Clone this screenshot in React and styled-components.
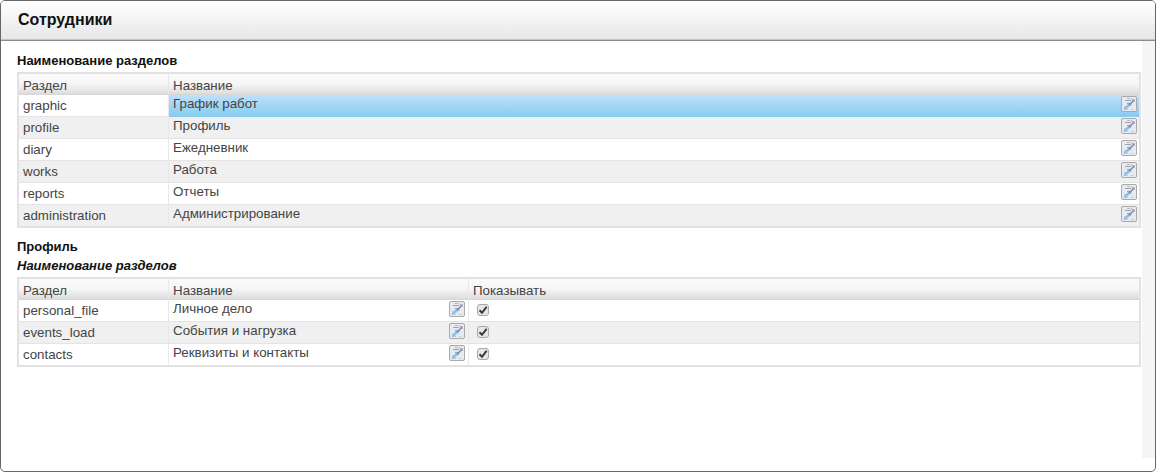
import styled, { createGlobalStyle } from 'styled-components';

const sections = [
  ['graphic', 'График работ'],
  ['profile', 'Профиль'],
  ['diary', 'Ежедневник'],
  ['works', 'Работа'],
  ['reports', 'Отчеты'],
  ['administration', 'Администрирование'],
];

const profile = [
  ['personal_file', 'Личное дело'],
  ['events_load', 'События и нагрузка'],
  ['contacts', 'Реквизиты и контакты'],
];

const EditIcon = () => (
  <EditButton>
    <svg width="14" height="14" viewBox="0 0 14 14">
      <path d="M2 13V9h2l4-4 2 3-4 3v2z" fill="#a9d3f0" />
      <path d="M2 12.5l5-5" stroke="#7fb8e4" strokeWidth="1.2" />
      <path d="M3 3.5h6M5 6.5h3" stroke="#99a1b4" strokeWidth="1" fill="none" />
      <path d="M5 1.5h3" stroke="#b0b6c4" strokeWidth="1" fill="none" />
      <path d="M7 8.5L12.5 2.5" stroke="#78829a" strokeWidth="1.2" />
      <path d="M9.5 1.5l3 3.5" stroke="#8b93a8" strokeWidth="1" />
      <path d="M9 12.5h2.5" stroke="#c2c8d4" strokeWidth="1" />
    </svg>
  </EditButton>
);

const CheckMark = () => (
  <CheckBox>
    <svg width="10" height="10" viewBox="0 0 10 10">
      <path d="M1.5 5.2L4 7.8 8.6 1.8" stroke="#3a3a3a" strokeWidth="2" fill="none" />
    </svg>
  </CheckBox>
);

const App = () => {
  return (
    <Window>
      <GlobalStyle />
      <Header>Сотрудники</Header>
      <Body>
        <Content>
          <SectionTitle>Наименование разделов</SectionTitle>
          <Table>
            <HeadRow $columns="149px 1fr">
              <HeadCell>Раздел</HeadCell>
              <HeadCell>Название</HeadCell>
            </HeadRow>
            {sections.map(([key, name], i) => (
              <Row key={key} $columns="149px 1fr" $odd={i % 2 === 1}>
                <KeyCell>{key}</KeyCell>
                <NameCell $selected={i === 0} $wide>
                  {name}
                  <EditIcon />
                </NameCell>
              </Row>
            ))}
          </Table>
          <GroupTitle>Профиль</GroupTitle>
          <SubTitle>Наименование разделов</SubTitle>
          <Table>
            <HeadRow $columns="149px 300px 1fr">
              <HeadCell>Раздел</HeadCell>
              <HeadCell>Название</HeadCell>
              <HeadCell>Показывать</HeadCell>
            </HeadRow>
            {profile.map(([key, name], i) => (
              <Row key={key} $columns="149px 300px 1fr" $odd={i % 2 === 1}>
                <KeyCell>{key}</KeyCell>
                <NameCell>
                  {name}
                  <EditIcon />
                </NameCell>
                <CheckCell>
                  <CheckMark />
                </CheckCell>
              </Row>
            ))}
          </Table>
        </Content>
        <Track />
      </Body>
    </Window>
  );
};

const GlobalStyle = createGlobalStyle`
  html, body {
    margin: 0;
    padding: 0;
    background: #fff;
  }
`;

const Window = styled.div`
  box-sizing: border-box;
  width: 1156px;
  height: 472px;
  display: flex;
  flex-direction: column;
  border: 1px solid #666;
  border-radius: 5px;
  overflow: hidden;
  background: #fff;
  font-family: 'Liberation Sans', Arial, sans-serif;
`;

const Header = styled.div`
  box-sizing: border-box;
  height: 40px;
  flex: none;
  padding: 10px 0 0 17px;
  font-size: 16px;
  line-height: 18px;
  font-weight: bold;
  color: #111;
  background: linear-gradient(#fff, #e6e6e6);
  border-bottom: 1px solid #8c8c8c;
  box-shadow: inset 0 -1px 0 #c4c4c4;
`;

const Body = styled.div`
  flex: 1;
  display: flex;
  align-items: flex-start;
`;

const Content = styled.div`
  flex: 1;
  padding: 12px 0 0 16px;
`;

const Track = styled.div`
  width: 13px;
  height: 417px;
  flex: none;
  background: #f5f5f5;
`;

const SectionTitle = styled.div`
  font-size: 13px;
  line-height: 15px;
  font-weight: bold;
  color: #111;
  margin-bottom: 4px;
`;

const GroupTitle = styled(SectionTitle)`
  margin: 11px 0 4px;
`;

const SubTitle = styled(SectionTitle)`
  font-style: italic;
`;

const Table = styled.div`
  box-sizing: border-box;
  width: 1124px;
  border: 2px solid #e2e2e2;
`;

const HeadRow = styled.div`
  display: grid;
  grid-template-columns: ${(p) => p.$columns};
  height: 21px;
  background: linear-gradient(#fafafa 0%, #f6f6f6 50%, #dcdcdc 100%);
  border-bottom: 1px solid #d8d8d8;
  box-sizing: border-box;
`;

const HeadCell = styled.div`
  box-sizing: border-box;
  padding: 4px 0 0 4px;
  font-size: 13.33px;
  line-height: 15px;
  color: #444;
  border-left: 1px solid #e8e8e8;

  &:first-child {
    border-left: 0;
  }
`;

const Row = styled.div`
  box-sizing: border-box;
  display: grid;
  grid-template-columns: ${(p) => p.$columns};
  height: 22px;
  background: ${(p) => (p.$odd ? '#f0f0f0' : '#fff')};
  border-bottom: 1px solid #e4e4e4;

  &:last-child {
    border-bottom: 0;
    height: 21px;
  }
`;

const KeyCell = styled.div`
  padding: 3px 0 0 4px;
  font-size: 13.33px;
  line-height: 15px;
  color: #444;
`;

const NameCell = styled.div`
  box-sizing: border-box;
  display: flex;
  justify-content: space-between;
  padding: 1px ${(p) => (p.$wide ? '2px' : '3px')} 0 4px;
  margin-bottom: ${(p) => (p.$selected ? '-1px' : '0')};
  font-size: 13.33px;
  line-height: 15px;
  color: #444;
  border-left: 1px solid #e8e8e8;
  background: ${(p) => (p.$selected ? 'linear-gradient(#bfe0fa, #86cbee)' : 'transparent')};
`;

const CheckCell = styled.div`
  box-sizing: border-box;
  padding: 4px 0 0 8px;
  border-left: 1px solid #e8e8e8;
`;

const EditButton = styled.span`
  box-sizing: border-box;
  width: 16px;
  height: 16px;
  flex: none;
  display: flex;
  align-items: center;
  justify-content: center;
  border: 1px solid #aaa;
  border-radius: 2px;
  background: #e8eaef;
`;

const CheckBox = styled.span`
  box-sizing: border-box;
  width: 12px;
  height: 12px;
  display: flex;
  align-items: center;
  justify-content: center;
  border: 1px solid #a8a8a8;
  border-radius: 3px;
  background: #e6e6e6;
`;

export default App;
